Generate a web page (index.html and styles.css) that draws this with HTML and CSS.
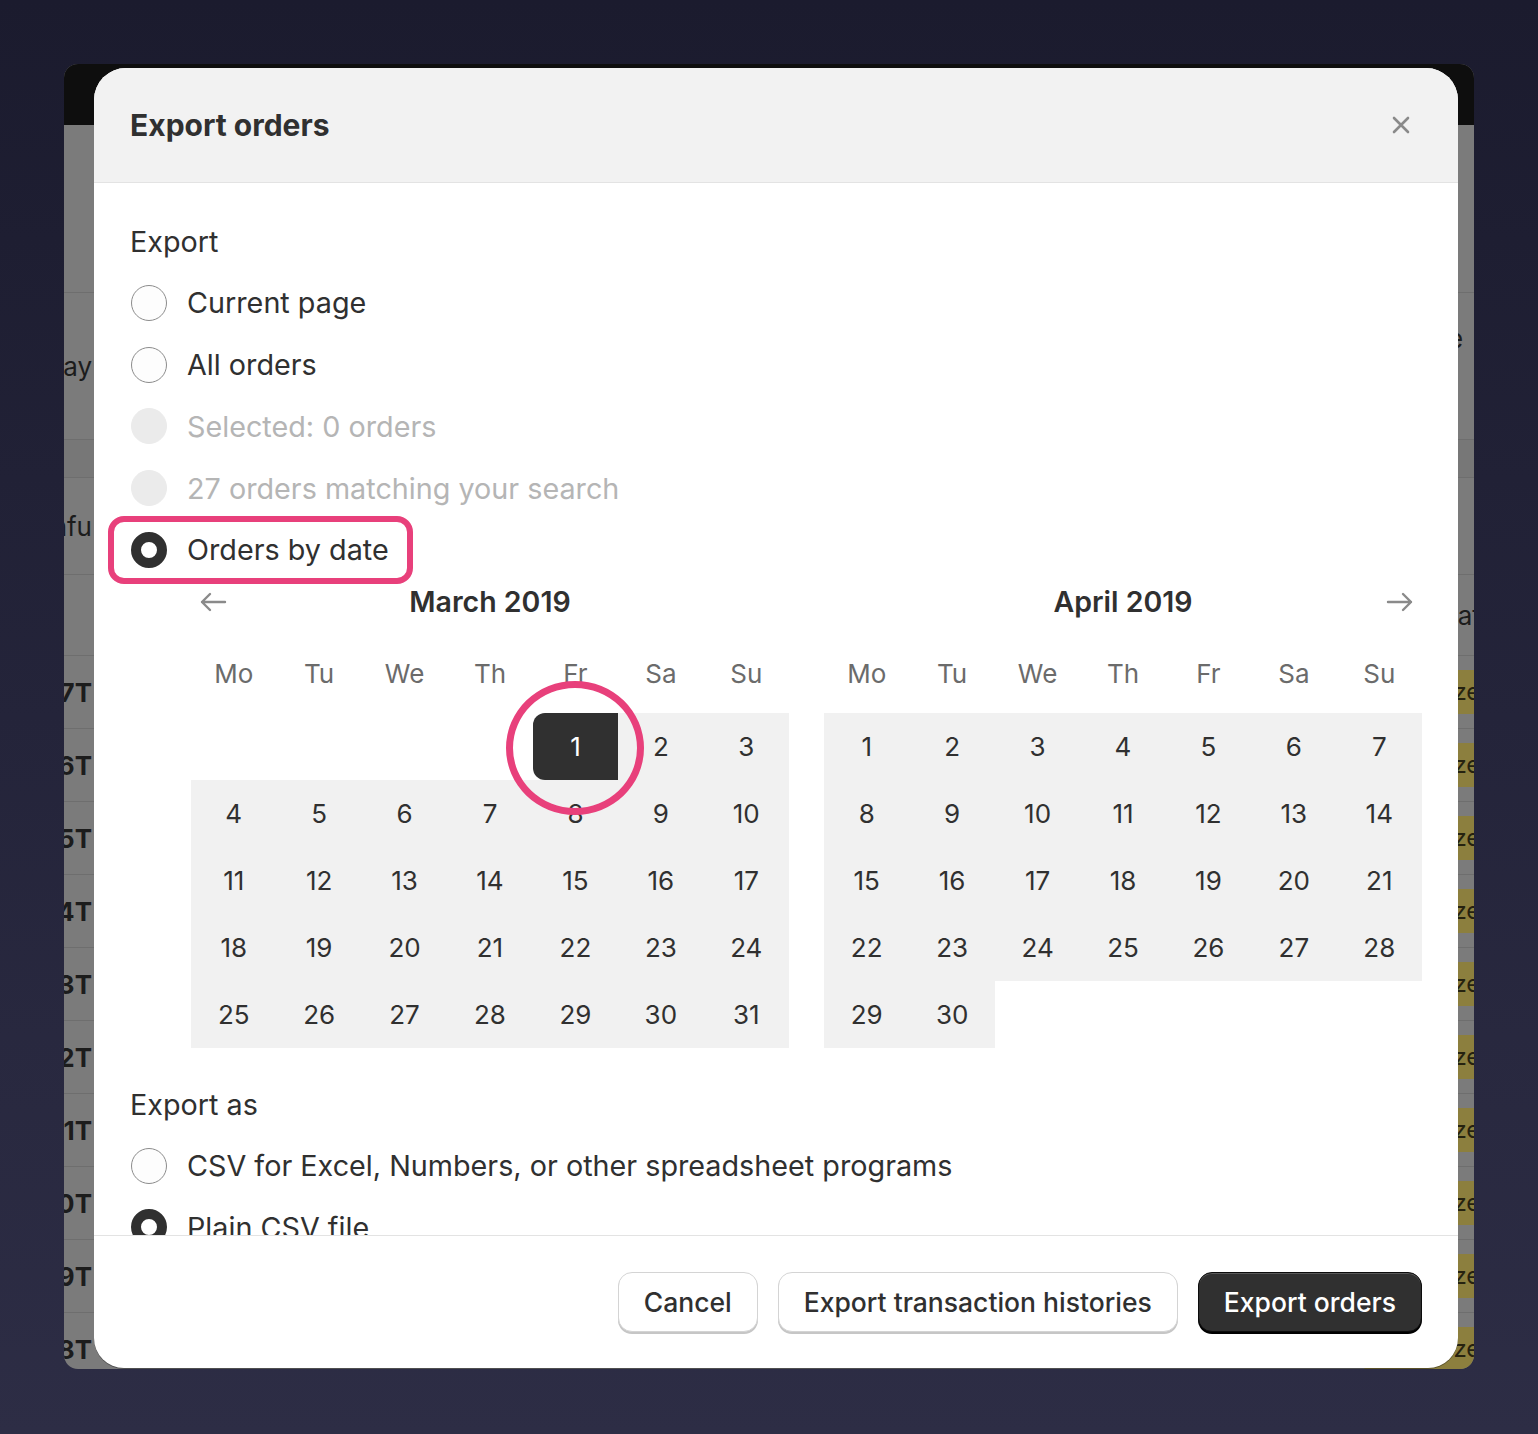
FILE: index.html
```html
<!DOCTYPE html>
<html>
<head>
    <title>Orders</title>
    <link rel="stylesheet" href="styles.css">
</head>
<body>
    <div class="app">
        <!-- Admin chrome behind the dialog -->
        <div class="topbar">
            <div class="search">Search</div>
        </div>
        <div class="app-block head"></div>
        <div class="app-block block-a">
            <span class="cell-left">Today</span>
            <span class="cell-right"><span class="hint pad-share">Share</span></span>
        </div>
        <div class="app-block block-b"></div>
        <div class="app-block block-c">
            <span class="cell-left">Unfu</span>
            <span class="cell-right"></span>
        </div>
        <div class="app-block block-d">
            <span class="cell-left"></span>
            <span class="cell-right"><span class="hint pad-date">Date</span></span>
        </div>
        <div class="app-block order"><span class="cell-left bold">#1027T</span><span class="cell-right"><span class="badge">Authorized</span></span></div>
        <div class="app-block order"><span class="cell-left bold">#1026T</span><span class="cell-right"><span class="badge">Authorized</span></span></div>
        <div class="app-block order"><span class="cell-left bold">#1025T</span><span class="cell-right"><span class="badge">Authorized</span></span></div>
        <div class="app-block order"><span class="cell-left bold">#1024T</span><span class="cell-right"><span class="badge">Authorized</span></span></div>
        <div class="app-block order"><span class="cell-left bold">#1023T</span><span class="cell-right"><span class="badge">Authorized</span></span></div>
        <div class="app-block order"><span class="cell-left bold">#1022T</span><span class="cell-right"><span class="badge">Authorized</span></span></div>
        <div class="app-block order"><span class="cell-left bold">#1021T</span><span class="cell-right"><span class="badge">Authorized</span></span></div>
        <div class="app-block order"><span class="cell-left bold">#1020T</span><span class="cell-right"><span class="badge">Authorized</span></span></div>
        <div class="app-block order"><span class="cell-left bold">#1019T</span><span class="cell-right"><span class="badge">Authorized</span></span></div>
        <div class="app-block order"><span class="cell-left bold">#1018T</span><span class="cell-right"><span class="badge">Authorized</span></span></div>

        <!-- Export dialog -->
        <div class="modal">
            <div class="modal-header">
                <h2 class="modal-title">Export orders</h2>
                <button class="close-btn" aria-label="Close">
                    <svg width="20" height="20" viewBox="0 0 20 20"><path d="M3 3 L17 17 M17 3 L3 17" stroke="#8a8a8a" stroke-width="2.6" stroke-linecap="round"/></svg>
                </button>
            </div>

            <div class="modal-body">
                <div class="field-label">Export</div>
                <div class="radio-list">
                    <label class="radio"><span class="radio-mark"></span>Current page</label>
                    <label class="radio"><span class="radio-mark"></span>All orders</label>
                    <label class="radio is-disabled"><span class="radio-mark"></span>Selected: 0 orders</label>
                    <label class="radio is-disabled"><span class="radio-mark"></span>27 orders matching your search</label>
                    <label class="radio is-checked has-callout"><span class="radio-mark"></span>Orders by date<span class="callout-box"></span></label>
                </div>

                <div class="calendar">
                    <div class="month">
                        <div class="month-head">
                            <button class="month-nav" aria-label="Previous month">
                                <svg width="30" height="24" viewBox="0 0 30 24"><path d="M27 12 H4 M12 4 L4 12 L12 20" fill="none" stroke="#8a8a8a" stroke-width="2.4" stroke-linecap="round" stroke-linejoin="round"/></svg>
                            </button>
                            <div class="month-title">March 2019</div>
                            <span class="month-nav"></span>
                        </div>
                        <div class="weekdays">
                            <span>Mo</span><span>Tu</span><span>We</span><span>Th</span><span>Fr</span><span>Sa</span><span>Su</span>
                        </div>
                        <div class="days">
                            <span class="day empty"></span><span class="day empty"></span><span class="day empty"></span><span class="day empty"></span>
                            <span class="day selected">1<span class="callout-ring"></span></span><span class="day">2</span><span class="day">3</span>
                            <span class="day">4</span><span class="day">5</span><span class="day">6</span><span class="day">7</span><span class="day">8</span><span class="day">9</span><span class="day">10</span>
                            <span class="day">11</span><span class="day">12</span><span class="day">13</span><span class="day">14</span><span class="day">15</span><span class="day">16</span><span class="day">17</span>
                            <span class="day">18</span><span class="day">19</span><span class="day">20</span><span class="day">21</span><span class="day">22</span><span class="day">23</span><span class="day">24</span>
                            <span class="day">25</span><span class="day">26</span><span class="day">27</span><span class="day">28</span><span class="day">29</span><span class="day">30</span><span class="day">31</span>
                        </div>
                    </div>

                    <div class="month">
                        <div class="month-head">
                            <span class="month-nav"></span>
                            <div class="month-title">April 2019</div>
                            <button class="month-nav" aria-label="Next month">
                                <svg width="30" height="24" viewBox="0 0 30 24"><path d="M3 12 H26 M18 4 L26 12 L18 20" fill="none" stroke="#8a8a8a" stroke-width="2.4" stroke-linecap="round" stroke-linejoin="round"/></svg>
                            </button>
                        </div>
                        <div class="weekdays">
                            <span>Mo</span><span>Tu</span><span>We</span><span>Th</span><span>Fr</span><span>Sa</span><span>Su</span>
                        </div>
                        <div class="days">
                            <span class="day">1</span><span class="day">2</span><span class="day">3</span><span class="day">4</span><span class="day">5</span><span class="day">6</span><span class="day">7</span>
                            <span class="day">8</span><span class="day">9</span><span class="day">10</span><span class="day">11</span><span class="day">12</span><span class="day">13</span><span class="day">14</span>
                            <span class="day">15</span><span class="day">16</span><span class="day">17</span><span class="day">18</span><span class="day">19</span><span class="day">20</span><span class="day">21</span>
                            <span class="day">22</span><span class="day">23</span><span class="day">24</span><span class="day">25</span><span class="day">26</span><span class="day">27</span><span class="day">28</span>
                            <span class="day">29</span><span class="day">30</span><span class="day empty"></span><span class="day empty"></span><span class="day empty"></span><span class="day empty"></span><span class="day empty"></span>
                        </div>
                    </div>
                </div>

                <div class="field-label spaced">Export as</div>
                <div class="radio-list">
                    <label class="radio"><span class="radio-mark"></span>CSV for Excel, Numbers, or other spreadsheet programs</label>
                    <label class="radio is-checked"><span class="radio-mark"></span>Plain CSV file</label>
                </div>
            </div>

            <div class="modal-footer">
                <button class="btn">Cancel</button>
                <button class="btn">Export transaction histories</button>
                <button class="btn btn-primary">Export orders</button>
            </div>
        </div>
    </div>
</body>
</html>
```

FILE: styles.css
```css
body {
    margin: 0;
    min-height: 1434px;
    background: linear-gradient(180deg, #1b1b2e 0%, #24243a 50%, #2d2d45 100%);
    font-family: Inter, "Noto Sans", sans-serif;
    color: #303030;
}

button {
    font-family: inherit;
}

/* Admin window, dimmed by the dialog backdrop */
.app {
    position: relative;
    width: 1410px;
    height: 1305px;
    margin: 64px 0 0 64px;
    border-radius: 14px;
    overflow: hidden;
    background: #7b7b7b;
}

.topbar {
    height: 61px;
    background: #0e0e0e;
    display: flex;
    align-items: center;
}

.search {
    margin-left: 184px;
    width: 1050px;
    height: 44px;
    border: 1px solid #2c2c2c;
    border-radius: 10px;
    box-sizing: border-box;
    padding-left: 80px;
    line-height: 42px;
    font-size: 24px;
    color: #8a8a8a;
}

.app-block {
    display: flex;
    align-items: center;
    justify-content: space-between;
    box-sizing: border-box;
    border-bottom: 1px solid #6e6e6e;
    font-size: 26px;
    color: #1c1c1c;
}

.app-block.head { height: 168px; }
.app-block.block-a { height: 147px; }
.app-block.block-b { height: 38px; background: #777; }
.app-block.block-c { height: 97px; }
.app-block.block-d { height: 81px; }
.app-block.order { height: 73px; }

.block-a .cell-right { align-self: flex-start; padding-top: 30px; }

.cell-left {
    width: 28px;
    display: flex;
    justify-content: flex-end;
    white-space: nowrap;
}

.cell-left.bold {
    font-weight: 700;
}

.cell-right {
    width: 113px;
    display: flex;
    white-space: nowrap;
}

.pad-share { padding-left: 31px; }
.pad-date { padding-left: 78px; }

.badge {
    height: 44px;
    line-height: 44px;
    padding: 0 10px;
    border-radius: 10px;
    background: #8c7f3e;
    font-size: 24px;
    color: #26220f;
}

/* Dialog */
.modal {
    position: absolute;
    left: 30px;
    top: 4px;
    width: 1364px;
    height: 1300px;
    background: #fff;
    border-radius: 32px 32px 30px 30px;
    box-shadow: 0 1px 0 rgba(0, 0, 0, 0.35);
    overflow: hidden;
    display: flex;
    flex-direction: column;
}

.modal-header {
    flex: none;
    height: 115px;
    box-sizing: border-box;
    background: #f2f2f2;
    border-bottom: 1px solid #e3e3e3;
    display: flex;
    align-items: center;
    justify-content: space-between;
    padding: 0 42px 0 36px;
}

.modal-title {
    margin: 0;
    font-size: 30px;
    font-weight: 700;
    color: #303030;
}

.close-btn {
    width: 30px;
    height: 30px;
    padding: 0;
    border: 0;
    background: none;
    display: flex;
    align-items: center;
    justify-content: center;
}

.modal-body {
    flex: 1;
    overflow: hidden;
    padding: 41px 35px 0 36px;
}

.field-label {
    font-size: 28.75px;
    line-height: 36px;
}

.field-label.spaced {
    margin-top: 39px;
}

.radio-list {
    margin-top: 12px;
}

.radio {
    height: 61.75px;
    display: flex;
    align-items: center;
    gap: 20px;
    font-size: 28.75px;
    color: #303030;
}

.radio-mark {
    flex: none;
    width: 36px;
    height: 36px;
    margin-left: 1px;
    box-sizing: border-box;
    border-radius: 50%;
    border: 1.5px solid #8c8c8c;
    background: #fdfdfd;
}

.radio.is-disabled {
    color: #b5b5b5;
}

.radio.is-disabled .radio-mark {
    border-color: #ebebeb;
    background: #ebebeb;
}

.radio.is-checked .radio-mark {
    border: 10px solid #303030;
    background: #fff;
}

.has-callout {
    position: relative;
}

/* Pink annotation marks */
.callout-box {
    position: absolute;
    left: -22px;
    top: -3px;
    width: 305px;
    height: 68px;
    box-sizing: border-box;
    border: 6px solid #e8407b;
    border-radius: 16px;
}

.callout-ring {
    position: absolute;
    left: 50%;
    top: 50%;
    width: 138px;
    height: 134px;
    margin: -65px 0 0 -69px;
    box-sizing: border-box;
    border: 7px solid #e8407b;
    border-radius: 50%;
    z-index: 2;
}

/* Date picker */
.calendar {
    display: flex;
    gap: 35px;
    margin: 3px 0 0 61px;
}

.month {
    flex: none;
    width: 598px;
}

.month-head {
    height: 36px;
    display: flex;
    align-items: center;
}

.month-nav {
    flex: none;
    width: 44px;
    height: 36px;
    padding: 0;
    border: 0;
    background: none;
    display: flex;
    align-items: center;
    justify-content: center;
}

.month-title {
    flex: 1;
    text-align: center;
    font-size: 28.5px;
    font-weight: 600;
    color: #303030;
}

.weekdays {
    display: grid;
    grid-template-columns: repeat(7, 1fr);
    height: 67px;
    margin-top: 20px;
    align-items: center;
    text-align: center;
    font-size: 26px;
    color: #6b6b6b;
}

.days {
    display: grid;
    grid-template-columns: repeat(7, 1fr);
    grid-auto-rows: 67px;
    margin-top: 6px;
}

.day {
    display: flex;
    align-items: center;
    justify-content: center;
    background: #f1f1f1;
    font-size: 26px;
    color: #303030;
}

.day.empty {
    background: none;
}

.day.selected {
    position: relative;
    background: #303030;
    color: #fff;
    border-radius: 12px 0 0 12px;
}

/* Footer actions */
.modal-footer {
    flex: none;
    height: 133px;
    box-sizing: border-box;
    border-top: 1px solid #e3e3e3;
    display: flex;
    align-items: center;
    justify-content: flex-end;
    gap: 20px;
    padding: 0 36px;
}

.btn {
    height: 60px;
    padding: 0 25px;
    box-sizing: border-box;
    border: 1px solid #d4d4d4;
    border-radius: 14px;
    background: #fff;
    box-shadow: 0 2px 0 #c6c6c6;
    font-size: 26.5px;
    font-weight: 500;
    color: #303030;
}

.btn-primary {
    background: #303030;
    border-color: #0c0c0c;
    color: #fff;
    box-shadow: inset 0 1px 0 rgba(255, 255, 255, 0.2), 0 2px 0 #000;
}
```
